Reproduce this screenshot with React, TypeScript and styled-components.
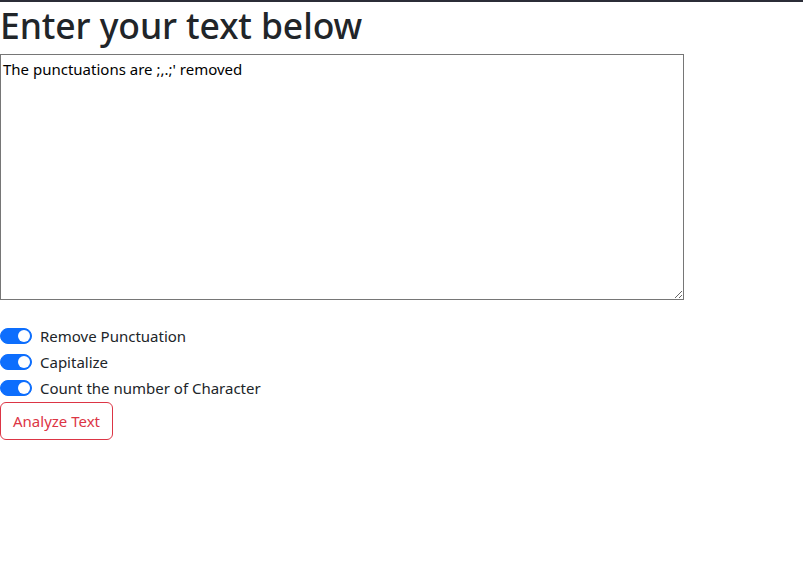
import React from "react";
import styled, { createGlobalStyle } from "styled-components";

const GlobalStyle = createGlobalStyle`
  html, body { margin: 0; padding: 0; background: #fff; }
  body {
    font-family: "Noto Sans", "Open Sans", sans-serif;
    font-size: 16px;
    line-height: 1.5;
    color: #212529;
  }
  *, *::before, *::after { box-sizing: border-box; }
`;

const TopBar = styled.div`
  height: 2px;
  background: #2b2d37;
`;

const Page = styled.main`
  display: flex;
  flex-direction: column;
  align-items: flex-start;
`;

const Heading = styled.h1`
  margin: 0 0 6px;
  font-size: 35.5px;
  font-weight: 500;
  line-height: 46px;
  letter-spacing: -0.1px;
`;

const TextArea = styled.textarea`
  width: 684px;
  height: 246px;
  margin: 0 0 24px;
  padding: 2px;
  border: 1px solid #767676;
  font-family: inherit;
  font-size: 15px;
  line-height: 24px;
  color: #000;
  resize: both;
  outline: none;
`;

const Options = styled.div`
  display: flex;
  flex-direction: column;
`;

const Check = styled.label`
  display: flex;
  align-items: center;
  gap: 8px;
  min-height: 24px;
  margin-bottom: 2px;
  font-size: 15px;
`;

const Switch = styled.span<{ $on: boolean }>`
  position: relative;
  display: inline-block;
  width: 32px;
  height: 16px;
  border-radius: 8px;
  background: ${(p) => (p.$on ? "#0d6efd" : "#fff")};
  border: 1px solid ${(p) => (p.$on ? "#0d6efd" : "#bfbfbf")};
  &::after {
    content: "";
    position: absolute;
    top: 1px;
    ${(p) => (p.$on ? "right: 1px;" : "left: 1px;")}
    width: 12px;
    height: 12px;
    border-radius: 50%;
    background: ${(p) => (p.$on ? "#fff" : "#bfbfbf")};
  }
`;

const Button = styled.button`
  height: 38px;
  padding: 0 12px;
  border: 1px solid #dc3545;
  border-radius: 6px;
  background: transparent;
  color: #dc3545;
  font-family: inherit;
  font-size: 15px;
  line-height: 24px;
  cursor: pointer;
`;

const options = ["Remove Punctuation", "Capitalize", "Count the number of Character"];

export default function App() {
  return (
    <>
      <GlobalStyle />
      <TopBar />
      <Page>
        <Heading>Enter your text below</Heading>
        <TextArea defaultValue="The punctuations are ;,.;' removed" />
        <Options>
          {options.map((o) => (
            <Check key={o}>
              <Switch $on />
              {o}
            </Check>
          ))}
        </Options>
        <Button>Analyze Text</Button>
      </Page>
    </>
  );
}
